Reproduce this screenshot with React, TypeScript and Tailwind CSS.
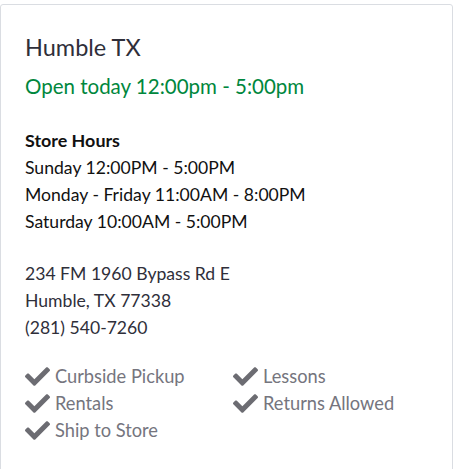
import React from 'react';
import { FaCheck } from 'react-icons/fa';

const hours = [
  'Sunday 12:00PM - 5:00PM',
  'Monday - Friday 11:00AM - 8:00PM',
  'Saturday 10:00AM - 5:00PM',
];

const features = ['Curbside Pickup', 'Lessons', 'Rentals', 'Returns Allowed', 'Ship to Store'];

const App: React.FC = () => {
  return (
    <div className="min-h-screen bg-white font-['Lato',sans-serif] pt-1">
      <div className="border border-[#dadde2] rounded-[3px] px-6 pt-7 pb-10 min-h-[480px]">
        <h2 className="text-[23.5px] leading-7 text-[#2f2f3a]">Humble TX</h2>
        <p className="text-[20.5px] leading-7 text-[#00873d] mt-[11px]">Open today 12:00pm - 5:00pm</p>

        <div className="mt-[27px] text-[17.6px] leading-[27px] text-[#111]">
          <h3 className="font-bold text-[17.9px]">Store Hours</h3>
          {hours.map(h => (
            <div key={h}>{h}</div>
          ))}
        </div>

        <div className="mt-[25px] text-[17.6px] leading-[27px] text-[#2f2f3a]">
          <div>234 FM 1960 Bypass Rd E</div>
          <div>Humble, TX 77338</div>
          <div>(281) 540-7260</div>
        </div>

        <div className="mt-[22px] grid grid-cols-[208px_1fr] text-[18.25px] leading-[27px] text-[#75757e]">
          {features.map(f => (
            <div key={f} className="flex items-center gap-[5px]">
              <FaCheck className="w-[25px] h-[25px] text-[#6c6c72]" />
              <span>{f}</span>
            </div>
          ))}
        </div>
      </div>
    </div>
  );
};

export default App;
